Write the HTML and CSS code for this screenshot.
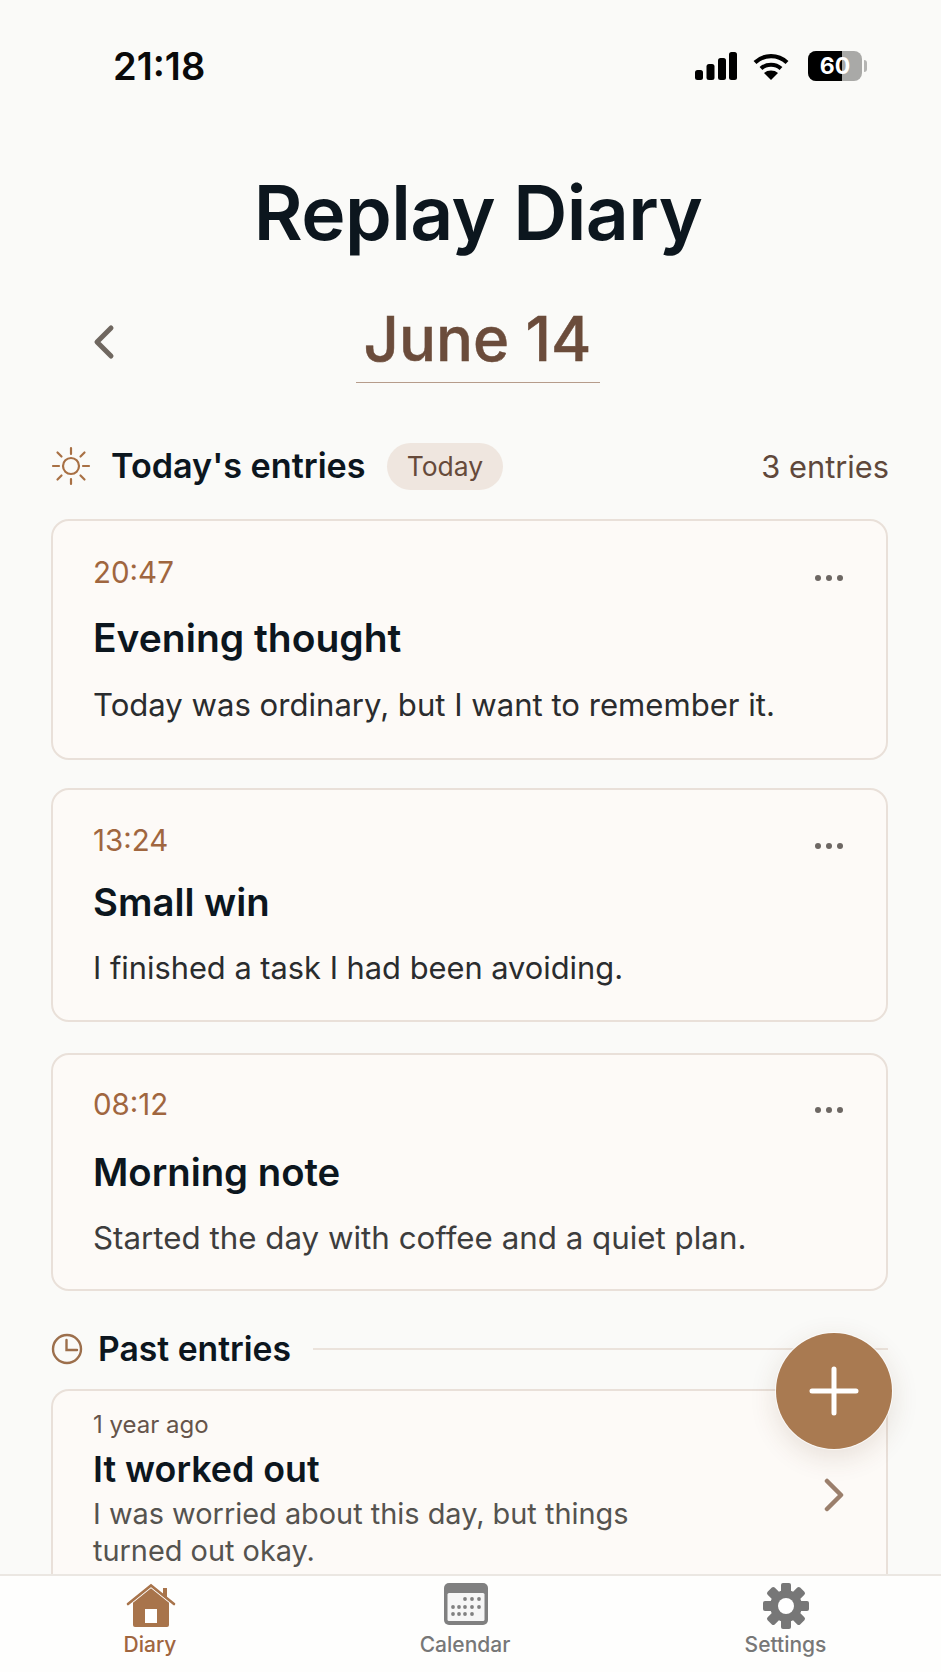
FILE: index.html
```html
<!DOCTYPE html>
<html lang="en">
<head>
<meta charset="utf-8">
<title>Replay Diary</title>
<link rel="stylesheet" href="styles.css">
</head>
<body>
<div class="app">
  <header class="status">
    <span class="clock">21:18</span>
    <div class="status-icons">
      <svg class="sig" viewBox="0 0 42 28" width="42" height="28"><g fill="#000"><rect x="0" y="18" width="8" height="10" rx="2.5"/><rect x="11.5" y="12" width="8" height="16" rx="2.5"/><rect x="23" y="6" width="8" height="22" rx="2.5"/><rect x="34" y="0" width="8" height="28" rx="2.5"/></g></svg>
      <svg class="wifi" viewBox="0 0 36 28" width="36" height="28"><g fill="none" stroke="#000" stroke-width="4.2"><path d="M2 10.5c9-8.5 23-8.5 32 0"/><path d="M8 16.5c5.6-5 14.4-5 20 0"/></g><path d="M18 28l-7-7c3.800-3.300 10.200-3.300 14 0z" fill="#000"/></svg>
      <div class="battery"><div class="batt-body"><div class="batt-fill"></div><span class="batt-num">60</span></div><div class="batt-cap"></div></div>
    </div>
  </header>
  <main class="main">
    <h1 class="title">Replay Diary</h1>
    <div class="date-row">
      <svg class="back" viewBox="0 0 24 36" width="24" height="36"><path d="M19 4L5 18l14 14" fill="none" stroke="#6f6760" stroke-width="5" stroke-linecap="round" stroke-linejoin="round"/></svg>
      <h2 class="date">June 14</h2>
    </div>
    <section class="today">
      <div class="sec-head">
        <svg class="sun" viewBox="0 0 40 40" width="40" height="40"><g fill="none" stroke="#a87044" stroke-width="2.200" stroke-linecap="round"><circle cx="20" cy="20" r="8"/><path d="M20 2v6M20 33v5M2 20h6M32 20h6M6.500 6.500l4 4M29.500 29.500l4 4M6.500 33.500l4-4M29.500 10.500l4-4"/></g></svg>
        <h3 class="sec-title">Today's entries</h3>
        <span class="pill">Today</span>
        <span class="count">3 entries</span>
      </div>
      <article class="card card-a">
        <div class="card-top"><time class="time">20:47</time><span class="more"><i></i><i></i><i></i></span></div>
        <h4 class="card-title">Evening thought</h4>
        <p class="card-text">Today was ordinary, but I want to remember it.</p>
      </article>
      <article class="card card-b">
        <div class="card-top"><time class="time">13:24</time><span class="more"><i></i><i></i><i></i></span></div>
        <h4 class="card-title card-title-sm">Small win</h4>
        <p class="card-text">I finished a task I had been avoiding.</p>
      </article>
      <article class="card card-c">
        <div class="card-top"><time class="time">08:12</time><span class="more"><i></i><i></i><i></i></span></div>
        <h4 class="card-title card-title-sm">Morning note</h4>
        <p class="card-text muted">Started the day with coffee and a quiet plan.</p>
      </article>
    </section>
    <section class="past">
      <div class="past-head">
        <svg class="clock-ico" viewBox="0 0 32 32" width="32" height="32"><g fill="none" stroke="#9c6f4c" stroke-width="2.400" stroke-linecap="round"><circle cx="16" cy="16" r="14"/><path d="M15.500 7v10H26"/></g></svg>
        <h3 class="sec-title past-sec-title">Past entries</h3>
        <div class="rule"></div>
      </div>
      <article class="past-card">
        <div class="past-body">
          <div class="ago">1 year ago</div>
          <h4 class="past-title">It worked out</h4>
          <p class="past-text">I was worried about this day, but things turned out okay.</p>
        </div>
        <svg class="next" viewBox="0 0 22 34" width="22" height="34"><path d="M4 3l14 14L4 31" fill="none" stroke="#9b7f6c" stroke-width="4.500" stroke-linecap="round" stroke-linejoin="round"/></svg>
      </article>
    </section>
  </main>
  <button class="fab" aria-label="Add"><svg viewBox="0 0 50 50" width="50" height="50"><path d="M25 3v44M3 25h44" stroke="#fff" stroke-width="5" stroke-linecap="round"/></svg></button>
  <nav class="tabs">
    <div class="tab tab-active">
      <svg class="tab-ico-home" viewBox="0 0 50 46" width="50" height="46"><path d="M7 19L25 4l18 15v23a2 2 0 0 1-2 2H9a2 2 0 0 1-2-2z" fill="#a8744b"/><path d="M2 20.500L25 2l23 18.500" fill="none" stroke="#fff" stroke-width="5"/><path d="M2 21L25 2.500 48 21" fill="none" stroke="#a8744b" stroke-width="2.600" stroke-linecap="round"/><path d="M37 5h4v11l-4-3z" fill="#a8744b"/><rect x="19" y="26" width="12" height="14" fill="#fff"/></svg>
      <span>Diary</span>
    </div>
    <div class="tab">
      <svg class="tab-ico-cal" viewBox="0 0 44 42" width="44" height="42"><rect x="0" y="0" width="44" height="42" rx="5" fill="#808080"/><rect x="3.500" y="10" width="37" height="28" rx="1.500" fill="#f6f6f6"/><g fill="#808080"><circle cx="21" cy="16" r="1.900"/><circle cx="28" cy="16" r="1.900"/><circle cx="35" cy="16" r="1.900"/><circle cx="9" cy="24" r="1.900"/><circle cx="15" cy="24" r="1.900"/><circle cx="21" cy="24" r="1.900"/><circle cx="28" cy="24" r="1.900"/><circle cx="35" cy="24" r="1.900"/><circle cx="9" cy="31" r="1.900"/><circle cx="15" cy="31" r="1.900"/><circle cx="21" cy="31" r="1.900"/><circle cx="28" cy="31" r="1.900"/></g></svg>
      <span>Calendar</span>
    </div>
    <div class="tab">
      <svg viewBox="0 0 48 46" width="48" height="46"><g fill="#777"><circle cx="24" cy="23" r="16"/><g id="t"><rect x="19" y="0" width="10" height="10" rx="2"/><rect x="19" y="36" width="10" height="10" rx="2"/></g><use href="#t" transform="rotate(45 24 23)"/><use href="#t" transform="rotate(90 24 23)"/><use href="#t" transform="rotate(135 24 23)"/></g><circle cx="24" cy="23" r="8" fill="#fff"/></svg>
      <span>Settings</span>
    </div>
  </nav>
</div>
</body>
</html>
```
FILE: styles.css
```css
* { box-sizing: border-box; }
html, body { margin: 0; padding: 0; }
body {
  width: 941px;
  height: 1672px;
  overflow: hidden;
  background: #fafaf8;
  font-family: Inter, "Liberation Sans", sans-serif;
  color: #0c161e;
}
.app {
  position: relative;
  width: 941px;
  height: 1672px;
  display: flex;
  flex-direction: column;
  overflow: hidden;
}
.status {
  flex: none;
  height: 110px;
  padding: 44px 74px 0 113px;
  display: flex;
  justify-content: space-between;
  align-items: flex-start;
}
.clock { font-size: 38px; line-height: 44px; font-weight: 600; color: #0a0a0a; }
.status-icons { display: flex; align-items: center; gap: 17px; height: 44px; }
.wifi { margin-left: -1px; margin-right: 2px; }
.battery { display: flex; align-items: center; gap: 2px; }
.batt-body {
  position: relative;
  width: 54px;
  height: 30px;
  border-radius: 8px;
  background: #a9a9a7;
  overflow: hidden;
  display: flex;
  align-items: center;
  justify-content: center;
}
.batt-fill { position: absolute; left: 0; top: 0; bottom: 0; width: 34px; background: #000; }
.batt-num { position: relative; color: #fff; font-size: 23px; font-weight: 700; }
.batt-cap { width: 3px; height: 12px; background: #b5b5b3; border-radius: 0 3px 3px 0; }
.main { flex: 1; min-height: 0; overflow: hidden; padding: 0 53px 0 51px; }
.title {
  margin: 57px 0 0;
  text-align: center;
  font-size: 75px;
  line-height: 92px;
  font-weight: 600;
  color: #0c161e;
  letter-spacing: -0.6px;
  padding-left: 17px;
}
.date-row { margin-top: 45px; position: relative; display: flex; justify-content: center; padding-left: 16px; }
.back { position: absolute; left: 41px; top: 20px; }
.date {
  margin: 0;
  width: 244px;
  height: 79px;
  text-align: center;
  font-size: 61.500px;
  line-height: 70px;
  font-weight: 500;
  -webkit-text-stroke: 0.5px #6b4c3b;
  color: #6b4c3b;
  border-bottom: 1px solid #b69c8b;
}
.today { margin-top: 58px; }
.sec-head { display: flex; align-items: center; height: 50px; }
.sun { margin-right: 20px; flex: none; }
.sec-title { margin: 0; font-size: 34.200px; line-height: 40px; font-weight: 600; color: #0c161e; }
.past-sec-title { font-size: 33.700px; }
.pill {
  margin-left: 21px;
  height: 47px;
  padding: 0 20px;
  display: flex;
  align-items: center;
  border-radius: 24px;
  background: #efe6df;
  color: #664a3a;
  font-size: 26.500px;
}
.count { margin-left: auto; margin-right: -1px; font-size: 30.800px; color: #5f483b; }
.card {
  margin-top: 28px;
  background: #fdfaf7;
  border: 2px solid #e9e0d9;
  border-radius: 18px;
  padding: 0 40px;
}
.today .sec-head + .card { margin-top: 28px; }
.card-a { height: 241px; padding-top: 33px; }
.card-b { height: 234px; padding-top: 32px; }
.card-c { height: 238px; margin-top: 31px; padding-top: 31px; }
.card-top { display: flex; justify-content: space-between; align-items: center; height: 36px; }
.time { font-size: 29.500px; line-height: 36px; color: #a0663f; }
.more { display: flex; gap: 5px; margin-right: 3px; margin-top: 12px; }
.more i { width: 6px; height: 6px; border-radius: 50%; background: #6d6763; }
.card-title { margin: 0; font-size: 39px; line-height: 48px; font-weight: 600; color: #0c161e; }
.card-title-sm { font-size: 38.300px; }
.card-a .card-title { margin-top: 24px; }
.card-b .card-title { margin-top: 20px; }
.card-c .card-title { margin-top: 26px; }
.card-text { margin: 0; font-size: 31.100px; line-height: 40px; color: #2a2c2e; }
.card-a .card-text { margin-top: 23px; }
.card-b .card-text { margin-top: 22px; font-size: 30.800px; }
.card-c .card-text { margin-top: 22px; font-size: 31.300px; }
.card-text.muted { color: #3d3d3d; }
.past { margin-top: 34px; }
.past-head { display: flex; align-items: center; height: 48px; }
.clock-ico { margin-right: 15px; flex: none; }
.rule { flex: 1; height: 2px; margin-left: 22px; background: #ebe3dc; }
.past-card {
  margin-top: 16px;
  height: 230px;
  background: #fdfaf7;
  border: 2px solid #e9e0d9;
  border-bottom: 0;
  border-radius: 18px 18px 0 0;
  padding: 19px 40px 0 40px;
  display: flex;
  align-items: flex-start;
  justify-content: space-between;
}
.past-body { width: 560px; }
.ago { font-size: 24px; line-height: 30px; color: #66544a; }
.past-title { margin: 7px 0 0; font-size: 35.800px; line-height: 44px; font-weight: 600; color: #0c161e; }
.past-text { margin: 4px 0 0; font-size: 28.900px; line-height: 37px; color: #55534f; }
.next { margin-top: 68px; margin-right: 1px; }
.fab {
  position: absolute;
  left: 776px;
  top: 1333px;
  width: 116px;
  height: 116px;
  padding: 0;
  border: 0;
  border-radius: 50%;
  background: #a97a51;
  box-shadow: 0 0 0 1px rgba(255, 255, 255, 0.7), 0 8px 28px rgba(90, 60, 30, 0.14);
  display: flex;
  align-items: center;
  justify-content: center;
}
.tabs {
  flex: none;
  height: 98px;
  background: #fefefd;
  border-top: 2px solid #ebe7e2;
  position: relative;
  display: grid;
  grid-template-columns: 300px 330px 311px;
}
.tab {
  display: flex;
  flex-direction: column;
  align-items: center;
  padding-top: 7px;
  padding-bottom: 14px;
  font-size: 21px;
  line-height: 26px;
  font-weight: 500;
  color: #777;
}
.tab span { margin-top: auto; }
.tab-ico-home { margin-left: 1px; }
.tab-ico-cal { margin-left: 1px; }
.tab-active { color: #a0663f; }
```
